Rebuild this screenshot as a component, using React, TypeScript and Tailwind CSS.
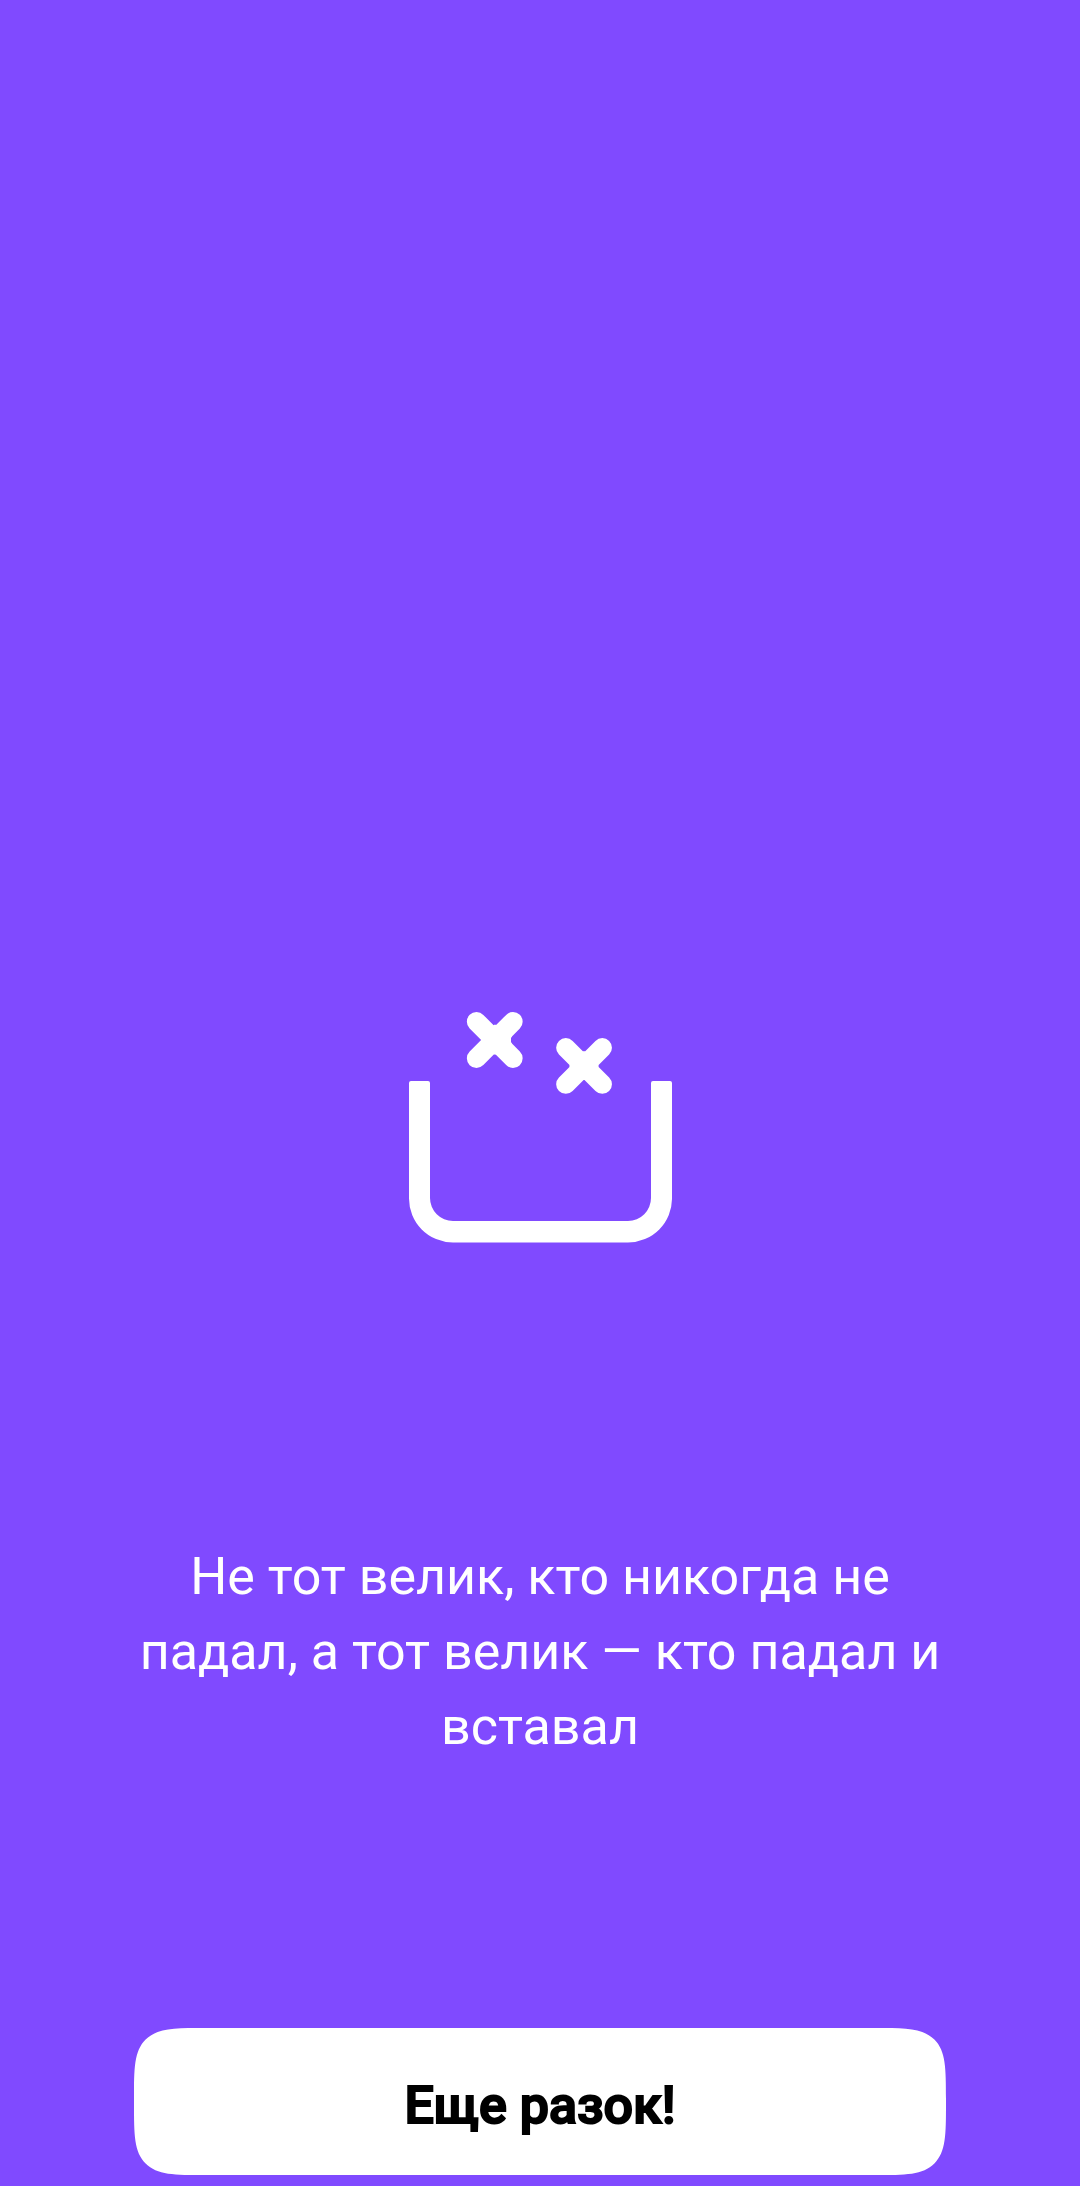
export default function App() {
  return (
    <main className="flex min-h-screen flex-col items-center bg-[#804aff] px-[134px] pt-[1010px] font-['Roboto',sans-serif]">
      <svg className="w-[264px]" viewBox="408 1010 264 234" fill="#fff" aria-hidden="true">
        <path d="M411 1081H428A2 2 0 0 1 430 1083V1198A23 23 0 0 0 453 1221H628A23 23 0 0 0 651 1198V1083A2 2 0 0 1 653 1081H670A2 2 0 0 1 672 1083V1198A44 44 0 0 1 628 1242.5H453A44 44 0 0 1 409 1198V1083A2 2 0 0 1 411 1081Z" />
        <path
          d="M476.5 1021.7L513 1058.3M513 1021.7L476.5 1058.3M565.8 1047.7L602.3 1084.2M602.3 1047.7L565.8 1084.2"
          stroke="#fff"
          strokeWidth="19.3"
          strokeLinecap="round"
        />
        <path d="M494 1024.8H496L512 1036L511 1038V1042L512 1044L496 1054.5H494L481 1041V1039ZM583 1051.3H585L598.5 1065V1067L585 1080H583L569.5 1067V1065Z" />
      </svg>
      <p className="mt-[295px] text-center text-[52px] leading-[75px] text-white">
        Не тот велик, кто никогда не падал, а тот велик — кто падал и вставал
      </p>
      <button
        type="button"
        className="mt-[264px] mb-[11px] h-[147px] w-full rounded-[73px] bg-white pt-2 text-[52px] font-medium text-black [-webkit-text-stroke:2px_black] [corner-shape:squircle]"
      >
        Еще разок!
      </button>
    </main>
  );
}
